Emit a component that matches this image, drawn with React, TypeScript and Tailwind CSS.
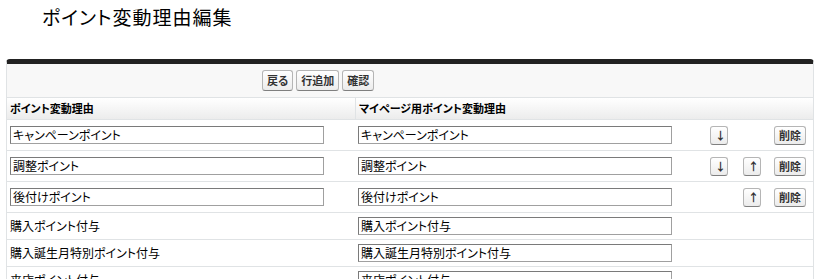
const rows = [
  { name: 'キャンペーンポイント', myPage: 'キャンペーンポイント', editable: true, down: true, up: false },
  { name: '調整ポイント', myPage: '調整ポイント', editable: true, down: true, up: true },
  { name: '後付けポイント', myPage: '後付けポイント', editable: true, down: false, up: true },
  { name: '購入ポイント付与', myPage: '購入ポイント付与', editable: false, down: false, up: false },
  { name: '購入誕生月特別ポイント付与', myPage: '購入誕生月特別ポイント付与', editable: false, down: false, up: false },
  { name: '来店ポイント付与', myPage: '来店ポイント付与', editable: false, down: false, up: false },
]

const font = "font-['Noto_Sans_CJK_JP','Noto_Sans',sans-serif] [font-feature-settings:'palt']"

const Btn = ({ label, className = '' }: { label: string; className?: string }) => (
  <button
    className={`rounded-[3px] border border-[#b5b5b5] border-b-[#7f7f7f] bg-gradient-to-b from-white to-[#ececec] px-[4px] text-[11px] font-bold leading-none text-[#333] ${className}`}
  >
    {label}
  </button>
)

const TextInput = ({ value }: { value: string }) => (
  <input
    readOnly
    value={value}
    className="h-[18px] w-[314px] border border-[#7a7a7a] border-r-[#a0a0a0] border-b-[#a0a0a0] bg-white px-[2px] text-[12px] leading-none text-black outline-none"
  />
)

export default function App() {
  return (
    <div className={`h-[279px] w-[820px] overflow-hidden bg-white ${font}`}>
      <h1 className="h-[59px] pl-[42px] pt-[4px] text-[19px] font-normal leading-[26px] tracking-[1px] text-black">
        ポイント変動理由編集
      </h1>

      <div className="ml-[6px] w-[808px] rounded-t-[4px] border border-t-[5px] border-[#e0e3e5] border-t-[#222] bg-[#f8f8f8]">
        <div className="flex h-[33px] items-center gap-[3px] pl-[255px]">
          <Btn label="戻る" className="h-[21px]" />
          <Btn label="行追加" className="h-[21px]" />
          <Btn label="確認" className="h-[21px]" />
        </div>

        <div className="flex h-[23px] items-center border-y border-[#e0e3e5] bg-gradient-to-b from-white to-[#ececec] text-[11px] font-bold text-black">
          <div className="w-[349px] border-r border-[#e0e3e5] pl-[3px] leading-[21px]">ポイント変動理由</div>
          <div className="pl-[3px]">マイページ用ポイント変動理由</div>
        </div>

        {rows.map((r) => (
          <div
            key={r.name}
            className={`flex items-center border-b border-[#e0e3e5] bg-white text-[12px] text-black ${r.editable ? 'h-[31px]' : 'h-[27px]'}`}
          >
            <div className="w-[349px] pl-[3px]">
              {r.editable ? <TextInput value={r.name} /> : <span>{r.name}</span>}
            </div>
            <div className="w-[344px] pl-[2px]">
              <TextInput value={r.myPage} />
            </div>
            {r.editable && (
              <>
                <div className="w-[33px] pl-[10px]">
                  {r.down && <Btn label="↓" className="h-[19px] w-[18px] px-0" />}
                </div>
                <div className="w-[33px] pl-[10px]">
                  {r.up && <Btn label="↑" className="h-[19px] w-[18px] px-0" />}
                </div>
                <div className="pl-[8px]">
                  <Btn label="削除" className="h-[19px]" />
                </div>
              </>
            )}
          </div>
        ))}
      </div>
    </div>
  )
}
